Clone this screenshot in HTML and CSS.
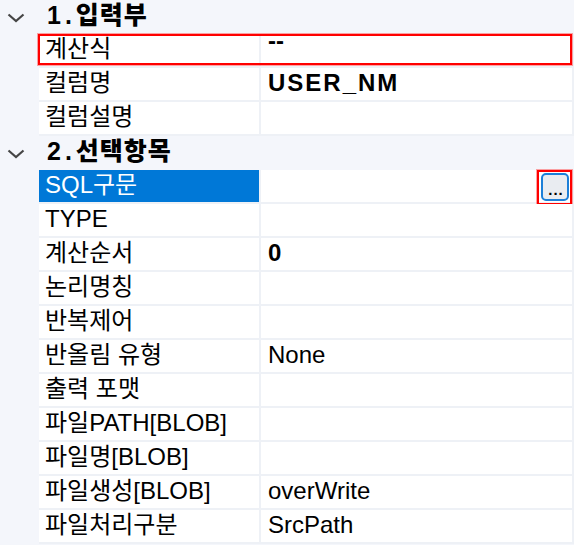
FILE: index.html
```html
<!DOCTYPE html>
<html lang="ko">
<head>
<meta charset="utf-8">
<title>Property Grid</title>
<link rel="stylesheet" href="styles.css">
</head>
<body>
<div class="grid">
  <div class="cat">
    <span class="chev"><svg width="18" height="10" viewBox="0 0 18 10"><polyline points="1.5,1.5 9,8 16.5,1.5" fill="none" stroke="#454545" stroke-width="2.2"/></svg></span>
    <span class="cat-text"><span class="num">1.</span>입력부</span>
  </div>
  <div class="row marked">
    <div class="label">계산식</div>
    <div class="value strong"><span class="dash">--</span></div>
  </div>
  <div class="row">
    <div class="label">컬럼명</div>
    <div class="value strong wide">USER_NM</div>
  </div>
  <div class="row">
    <div class="label">컬럼설명</div>
    <div class="value"></div>
  </div>
  <div class="cat">
    <span class="chev"><svg width="18" height="10" viewBox="0 0 18 10"><polyline points="1.5,1.5 9,8 16.5,1.5" fill="none" stroke="#454545" stroke-width="2.2"/></svg></span>
    <span class="cat-text"><span class="num">2.</span>선택항목</span>
  </div>
  <div class="row">
    <div class="label selected">SQL구문</div>
    <div class="value action"><button class="dots" type="button">...</button></div>
  </div>
  <div class="row">
    <div class="label">TYPE</div>
    <div class="value"></div>
  </div>
  <div class="row">
    <div class="label">계산순서</div>
    <div class="value strong">0</div>
  </div>
  <div class="row">
    <div class="label">논리명칭</div>
    <div class="value"></div>
  </div>
  <div class="row">
    <div class="label">반복제어</div>
    <div class="value"></div>
  </div>
  <div class="row">
    <div class="label">반올림 유형</div>
    <div class="value">None</div>
  </div>
  <div class="row">
    <div class="label">출력 포맷</div>
    <div class="value"></div>
  </div>
  <div class="row">
    <div class="label">파일PATH[BLOB]</div>
    <div class="value"></div>
  </div>
  <div class="row">
    <div class="label">파일명[BLOB]</div>
    <div class="value"></div>
  </div>
  <div class="row">
    <div class="label">파일생성[BLOB]</div>
    <div class="value">overWrite</div>
  </div>
  <div class="row">
    <div class="label">파일처리구분</div>
    <div class="value">SrcPath</div>
  </div>
</div>
</body>
</html>
```

FILE: styles.css
```css
html, body {
  margin: 0;
  padding: 0;
  background: #f4f6fb;
  overflow: hidden;
}

body {
  width: 574px;
  height: 545px;
  font-family: "Liberation Sans", "Noto Sans CJK KR", sans-serif;
  font-size: 24px;
  color: #000;
}

.grid {
  display: flex;
  flex-direction: column;
}

.cat {
  height: 34px;
  display: flex;
  align-items: center;
  background: #f4f6fb;
}

.chev {
  width: 39px;
  display: flex;
  padding-left: 7px;
  box-sizing: border-box;
  margin-top: 1px;
}

.cat-text {
  font-weight: 900;
  font-size: 25px;
  margin-left: 8px;
  line-height: 28px;
  padding-bottom: 5px;
  letter-spacing: 1px;
}

.num {
  letter-spacing: 4px;
}

.row {
  position: relative;
  margin-left: 39px;
  display: grid;
  grid-template-columns: 220px 311px;
  column-gap: 2px;
  padding: 0 2px 2px 0;
  background: #eef1f6;
}

.label,
.value {
  height: 32px;
  line-height: 30px;
  background: #fff;
  white-space: nowrap;
}

.label {
  padding-left: 6px;
  overflow: hidden;
}

.value {
  padding-left: 7px;
}

.strong {
  font-weight: bold;
}

.wide {
  letter-spacing: 2px;
}

.selected {
  background: #0078d7;
  color: #fff;
}

.dash {
  display: inline-block;
  transform: translateY(-8px);
}

.marked::after {
  content: "";
  position: absolute;
  left: -1px;
  right: 2px;
  top: 0;
  bottom: 3px;
  border: 2px solid #ff0000;
  box-shadow: 0 0 0 1px rgba(255, 90, 90, 0.55);
  pointer-events: none;
}

.action {
  display: flex;
  justify-content: flex-end;
  align-items: center;
  position: relative;
}

.dots {
  position: relative;
  width: 28px;
  height: 28px;
  margin-right: 3px;
  margin-top: 2px;
  padding: 0;
  border: 2px solid #1c7fd8;
  border-radius: 5px;
  background: #e9ecf1;
  font-family: "Liberation Sans", sans-serif;
  font-weight: bold;
  font-size: 15px;
  line-height: 30px;
  color: #000;
  letter-spacing: 1px;
  text-align: center;
  padding-left: 2px;
}

.dots::after {
  content: "";
  position: absolute;
  left: -6px;
  right: -5px;
  top: -5px;
  bottom: -6px;
  border: 2px solid #ff0000;
  box-shadow: 0 0 0 1px rgba(255, 90, 90, 0.55);
}
```
